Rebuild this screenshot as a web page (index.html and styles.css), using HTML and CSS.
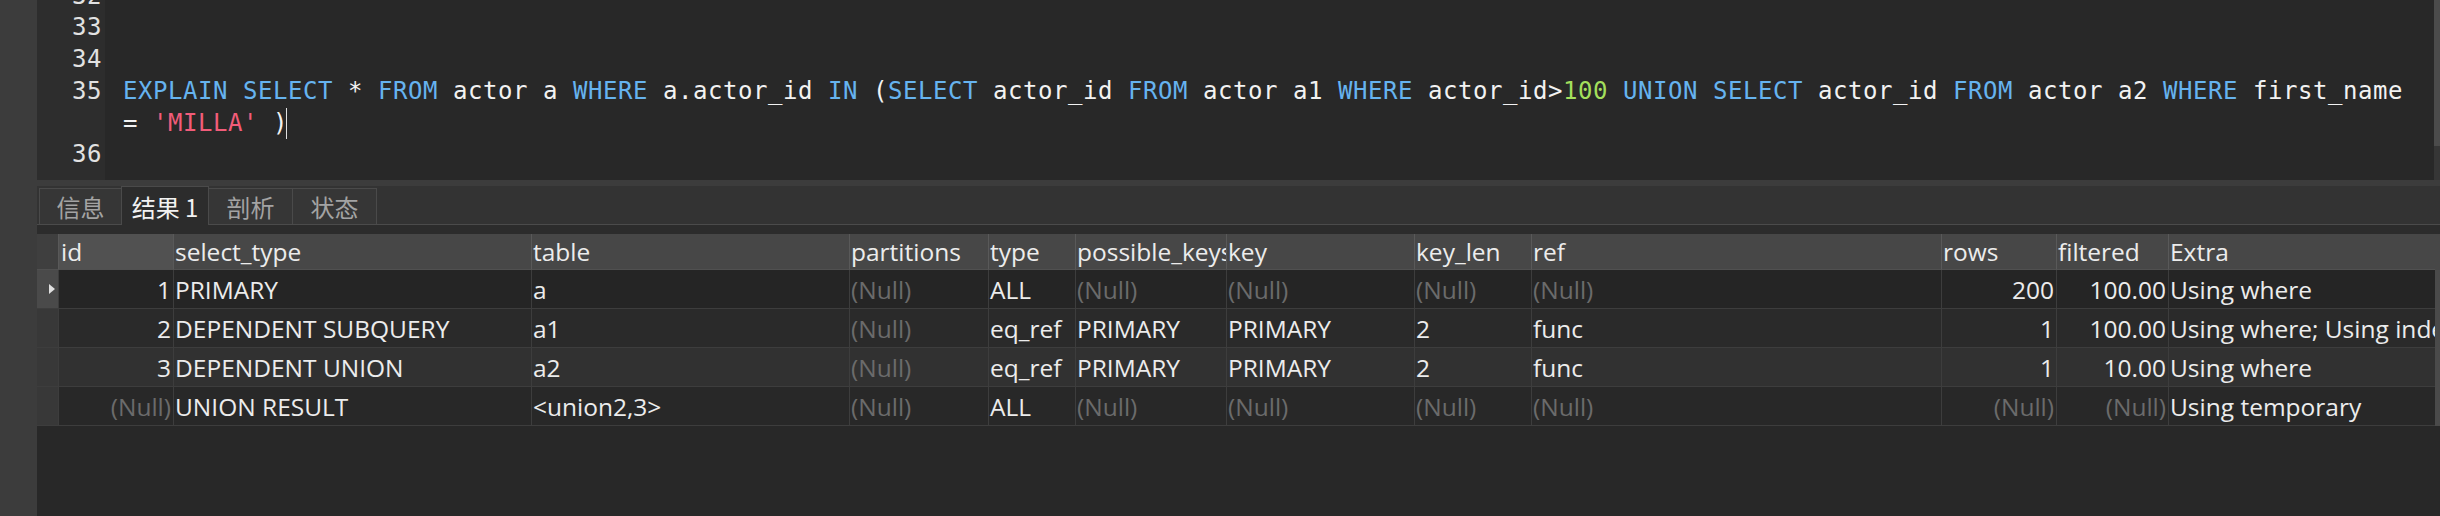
FILE: index.html
```html
<!DOCTYPE html>
<html lang="zh">
<head>
<meta charset="utf-8">
<title>Navicat EXPLAIN</title>
<link rel="stylesheet" href="styles.css">
</head>
<body>
<div class="app">
  <div class="side"></div>
  <div class="main">
    <div class="editor">
      <div class="gutter">
        <div class="lines">
          <div class="ln">32</div>
          <div class="ln">33</div>
          <div class="ln">34</div>
          <div class="ln">35</div>
          <div class="ln"></div>
          <div class="ln">36</div>
        </div>
      </div>
      <div class="code">
        <div class="cl"></div>
        <div class="cl"></div>
        <div class="cl"></div>
        <div class="cl"><span class="kw">EXPLAIN</span> <span class="kw">SELECT</span> * <span class="kw">FROM</span> actor a <span class="kw">WHERE</span> a.actor_id <span class="kw">IN</span> (<span class="kw">SELECT</span> actor_id <span class="kw">FROM</span> actor a1 <span class="kw">WHERE</span> actor_id&gt;<span class="num">100</span> <span class="kw">UNION</span> <span class="kw">SELECT</span> actor_id <span class="kw">FROM</span> actor a2 <span class="kw">WHERE</span> first_name</div>
        <div class="cl">= <span class="str">'MILLA'</span> )<span class="caret"></span></div>
        <div class="cl"></div>
      </div>
      <div class="escroll"><div class="ethumb"></div></div>
    </div>
    <div class="splitter"></div>
    <div class="tabbar">
      <div class="tab t1">信息</div>
      <div class="tab t2 active">结果 1</div>
      <div class="tab t3">剖析</div>
      <div class="tab t4">状态</div>
    </div>
    <div class="gridgap"></div>
    <div class="gridwrap">
      <div class="grid">
        <div class="row head">
          <div class="c ind"></div>
          <div class="c idh">id</div>
          <div class="c">select_type</div>
          <div class="c">table</div>
          <div class="c">partitions</div>
          <div class="c">type</div>
          <div class="c">possible_keys</div>
          <div class="c">key</div>
          <div class="c">key_len</div>
          <div class="c">ref</div>
          <div class="c">rows</div>
          <div class="c">filtered</div>
          <div class="c">Extra</div>
        </div>
        <div class="row r1">
          <div class="c ind cur"><span class="tri"></span></div>
          <div class="c num">1</div>
          <div class="c">PRIMARY</div>
          <div class="c">a</div>
          <div class="c nul">(Null)</div>
          <div class="c">ALL</div>
          <div class="c nul">(Null)</div>
          <div class="c nul">(Null)</div>
          <div class="c nul">(Null)</div>
          <div class="c nul">(Null)</div>
          <div class="c num">200</div>
          <div class="c num">100.00</div>
          <div class="c">Using where</div>
        </div>
        <div class="row r2">
          <div class="c ind"></div>
          <div class="c num">2</div>
          <div class="c">DEPENDENT SUBQUERY</div>
          <div class="c">a1</div>
          <div class="c nul">(Null)</div>
          <div class="c">eq_ref</div>
          <div class="c">PRIMARY</div>
          <div class="c">PRIMARY</div>
          <div class="c">2</div>
          <div class="c">func</div>
          <div class="c num">1</div>
          <div class="c num">100.00</div>
          <div class="c">Using where; Using index</div>
        </div>
        <div class="row r3">
          <div class="c ind"></div>
          <div class="c num">3</div>
          <div class="c">DEPENDENT UNION</div>
          <div class="c">a2</div>
          <div class="c nul">(Null)</div>
          <div class="c">eq_ref</div>
          <div class="c">PRIMARY</div>
          <div class="c">PRIMARY</div>
          <div class="c">2</div>
          <div class="c">func</div>
          <div class="c num">1</div>
          <div class="c num">10.00</div>
          <div class="c">Using where</div>
        </div>
        <div class="row r4">
          <div class="c ind"></div>
          <div class="c num nul">(Null)</div>
          <div class="c">UNION RESULT</div>
          <div class="c">&lt;union2,3&gt;</div>
          <div class="c nul">(Null)</div>
          <div class="c">ALL</div>
          <div class="c nul">(Null)</div>
          <div class="c nul">(Null)</div>
          <div class="c nul">(Null)</div>
          <div class="c nul">(Null)</div>
          <div class="c num nul">(Null)</div>
          <div class="c num nul">(Null)</div>
          <div class="c">Using temporary</div>
        </div>
      </div>
      <div class="vbar">
        <div class="vbar-head"></div>
        <div class="vbar-body"></div>
      </div>
    </div>
  </div>
</div>
</body>
</html>
```
FILE: styles.css
```css
html, body {
  margin: 0;
  padding: 0;
}
body {
  background: #282828;
  width: 2440px;
  height: 516px;
  overflow: hidden;
}
.app {
  display: flex;
  height: 516px;
}
.side {
  width: 37px;
  flex: none;
  background: #3c3c3c;
}
.main {
  flex: 1;
  min-width: 0;
  display: flex;
  flex-direction: column;
}

/* editor */
.editor {
  height: 180px;
  flex: none;
  display: flex;
  background: #282828;
  overflow: hidden;
}
.gutter {
  width: 68px;
  flex: none;
  background: #2d2d2d;
  overflow: hidden;
}
.lines {
  margin-top: -19.5px;
}
.ln, .cl {
  height: 31.75px;
  line-height: 31.75px;
  font-family: "DejaVu Sans Mono", monospace;
  font-size: 24px;
  letter-spacing: 0.55px;
  white-space: pre;
}
.ln {
  text-align: right;
  padding-right: 3px;
  color: #e2e2e2;
}
.code {
  flex: 1;
  min-width: 0;
  padding-left: 18px;
  margin-top: -19.5px;
  color: #f2f2f2;
}
.kw { color: #66b3ef; }
.num { color: #a3df5c; }
.str { color: #f25c79; }
.caret {
  display: inline-block;
  width: 1px;
  height: 31px;
  margin-left: -2px;
  background: #e0e0e0;
  vertical-align: top;
}
.escroll {
  width: 6px;
  flex: none;
  background: #363636;
}
.ethumb {
  height: 146px;
  background: #4b4b4b;
}

.splitter {
  height: 6px;
  flex: none;
  background: #3c3c3c;
}

/* tabs */
.tabbar {
  height: 38px;
  flex: none;
  background: #333333;
  border-bottom: 1px solid #4b4b4b;
  display: flex;
  align-items: flex-end;
  padding-left: 2px;
}
.tab {
  box-sizing: border-box;
  height: 36px;
  border: 1px solid #4a4a4a;
  border-bottom: none;
  background: #363636;
  color: #a3a3a3;
  font-family: "Noto Sans CJK SC", sans-serif;
  font-size: 24px;
  display: flex;
  align-items: center;
  justify-content: center;
  white-space: nowrap;
}
.tab + .tab { margin-left: -1px; }
.t1 { width: 83px; }
.t2 { width: 88px; }
.t3 { width: 85px; }
.t4 { width: 85px; }
.tab.active {
  height: 39px;
  margin-bottom: -1px;
  background: #2c2c2c;
  color: #f2f2f2;
  position: relative;
  z-index: 1;
}

.gridgap {
  height: 9px;
  flex: none;
  background: #2c2c2c;
}

/* grid */
.gridwrap {
  display: flex;
  flex: none;
}
.grid {
  flex: 1;
  min-width: 0;
  overflow: hidden;
}
.row {
  display: grid;
  grid-template-columns: 22px 115px 358px 318px 139px 87px 151px 188px 117px 410px 115px 112px 400px;
  height: 39px;
}
.row.head {
  height: 36px;
  background: #474747;
}
.c {
  box-sizing: border-box;
  border-right: 1px solid #3d3d3d;
  border-bottom: 1px solid #3d3d3d;
  padding: 0 2px 0 1px;
  display: flex;
  align-items: center;
  white-space: nowrap;
  overflow: hidden;
  font-family: "Open Sans", sans-serif;
  font-size: 24.5px;
  color: #ececec;
}
.head .c {
  border-right-color: #595959;
  border-bottom-color: #505050;
}
.head .ind { background: #3f3f3f; }
.head .idh { background: #515151; padding-left: 2px; }
.c.num { justify-content: flex-end; color: #ececec; }
.c.nul { color: #6b6b6b; }
.r1 { background: #252525; }
.r2 { background: #2a2a2a; }
.r3 { background: #313131; }
.r4 { background: #282828; }
.ind {
  background: #383838;
  justify-content: flex-end;
  padding-right: 3px;
}
.ind.cur { background: #4a4a4a; }
.tri {
  width: 0;
  height: 0;
  border-left: 6px solid #e0e0e0;
  border-top: 5.5px solid transparent;
  border-bottom: 5.5px solid transparent;
}
.vbar {
  width: 5px;
  flex: none;
}
.vbar-head {
  height: 36px;
  background: #474747;
}
.vbar-body {
  height: 156px;
  background: #4a4a4a;
}
```
